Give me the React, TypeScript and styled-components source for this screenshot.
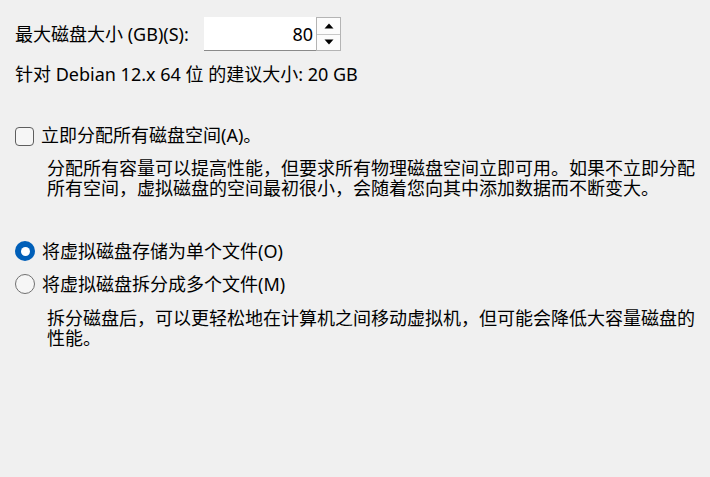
import React from "react";
import styled, { createGlobalStyle } from "styled-components";

const Global = createGlobalStyle`
  html, body {
    margin: 0;
    padding: 0;
    background: #f0f0f0;
  }
  body {
    font-family: "Noto Sans", "Noto Sans CJK SC", sans-serif;
    font-size: 18px;
    color: #000;
  }
`;

const Page = styled.div`
  width: 710px;
  min-height: 477px;
  box-sizing: border-box;
  padding: 17px 0 0 15px;
  background: #f0f0f0;
`;

const SizeRow = styled.div`
  display: grid;
  grid-template-columns: 189px 137px;
  height: 34px;
  align-items: center;
`;

const Label = styled.label`
  line-height: 20px;
  white-space: nowrap;
`;

const Spin = styled.div`
  display: flex;
  height: 34px;
`;

const SpinField = styled.div`
  width: 112px;
  box-sizing: border-box;
  background: #fff;
  border-bottom: 1px solid #8a8a8a;
  display: flex;
  align-items: center;
  justify-content: flex-end;
  padding-right: 3px;
  line-height: 20px;
`;

const SpinButtons = styled.div`
  width: 25px;
  box-sizing: border-box;
  border: 1px solid #b4b4b4;
  display: flex;
  flex-direction: column;
  background: #fcfcfc;
`;

const SpinBtn = styled.div<{ $down?: boolean }>`
  flex: 1;
  display: flex;
  align-items: center;
  justify-content: center;
  border-top: ${(p) => (p.$down ? "1px solid #c8c8c8" : "none")};
`;

const Hint = styled.div`
  margin-top: 12px;
  line-height: 22px;
  white-space: nowrap;
`;

const OptionRow = styled.div<{ $mt: number }>`
  display: flex;
  align-items: center;
  gap: 7px;
  height: 22px;
  margin-top: ${(p) => p.$mt}px;
  line-height: 22px;
  white-space: nowrap;
`;

const CheckBox = styled.span`
  width: 19px;
  height: 19px;
  box-sizing: border-box;
  border: 1px solid #5e5e5e;
  border-radius: 4px;
  background: #f6f6f6;
  flex: none;
  margin-top: 2px;
`;

const Radio = styled.span<{ $checked?: boolean }>`
  width: 20px;
  height: 20px;
  box-sizing: border-box;
  border-radius: 50%;
  flex: none;
  display: flex;
  align-items: center;
  justify-content: center;
  background: ${(p) => (p.$checked ? "#005fb8" : "#f6f6f6")};
  border: ${(p) => (p.$checked ? "none" : "1px solid #707070")};
`;

const RadioDot = styled.span`
  width: 9px;
  height: 9px;
  border-radius: 50%;
  background: #fff;
`;

const Desc = styled.p<{ $mt: number }>`
  margin: ${(p) => p.$mt}px 0 0 0;
  padding-left: 32px;
  line-height: 20px;
  white-space: nowrap;
`;

const Arrow = ({ down }: { down?: boolean }) => (
  <svg width="10" height="6" viewBox="0 0 10 6">
    <path d={down ? "M0.5 0.5 L9.5 0.5 L5 5.5 Z" : "M0.5 5.5 L9.5 5.5 L5 0.5 Z"} fill="#000" />
  </svg>
);

export default function App() {
  return (
    <>
      <Global />
      <Page>
        <SizeRow>
          <Label>最大磁盘大小 (GB)(S):</Label>
          <Spin>
            <SpinField>80</SpinField>
            <SpinButtons>
              <SpinBtn>
                <Arrow />
              </SpinBtn>
              <SpinBtn $down>
                <Arrow down />
              </SpinBtn>
            </SpinButtons>
          </Spin>
        </SizeRow>
        <Hint>针对 Debian 12.x 64 位 的建议大小: 20 GB</Hint>

        <OptionRow $mt={39}>
          <CheckBox />
          <span>立即分配所有磁盘空间(A)。</span>
        </OptionRow>
        <Desc $mt={12}>
          分配所有容量可以提高性能，但要求所有物理磁盘空间立即可用。如果不立即分配
          <br />
          所有空间，虚拟磁盘的空间最初很小，会随着您向其中添加数据而不断变大。
        </Desc>

        <OptionRow $mt={42}>
          <Radio $checked>
            <RadioDot />
          </Radio>
          <span>将虚拟磁盘存储为单个文件(O)</span>
        </OptionRow>
        <OptionRow $mt={11}>
          <Radio />
          <span>将虚拟磁盘拆分成多个文件(M)</span>
        </OptionRow>
        <Desc $mt={13}>
          拆分磁盘后，可以更轻松地在计算机之间移动虚拟机，但可能会降低大容量磁盘的
          <br />
          性能。
        </Desc>
      </Page>
    </>
  );
}
